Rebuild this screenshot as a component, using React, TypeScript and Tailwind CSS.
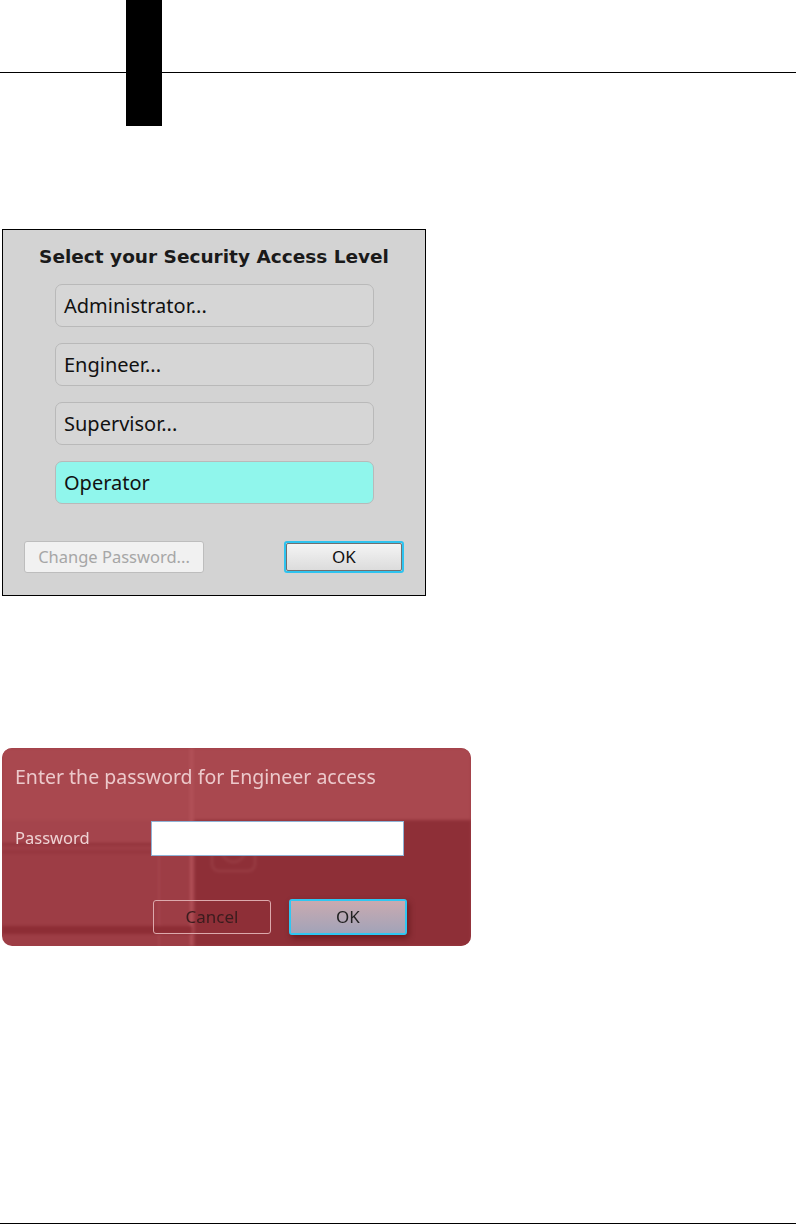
export default function App() {
  const btn =
    "h-[43px] w-[319px] rounded-[7px] border border-[#b9b9b9] px-[8px] flex items-center text-[20px] text-[#111]";
  return (
    <div className="w-[796px] h-[1225px] bg-white flex flex-col" style={{ fontFamily: '"Noto Sans", "Open Sans", sans-serif' }}>
      {/* header */}
      <div className="relative h-[126px] shrink-0">
        <div className="h-[73px] border-b border-black" />
        <div className="absolute left-[126px] top-0 w-[36px] h-[126px] bg-black" />
      </div>

      {/* Security access dialog */}
      <div className="ml-[2px] mt-[103px] w-[424px] h-[367px] border border-black bg-[#d3d3d3] flex flex-col">
        <div
          className="mt-[14px] text-center text-[18.5px] font-bold text-[#1a1a1a] leading-[26px]"
          style={{ fontFamily: '"DejaVu Sans", sans-serif' }}
        >
          Select your Security Access Level
        </div>
        <div className="mt-[14px] flex flex-col items-center gap-[16px] pl-[1px]">
          <div className={btn + " bg-[#d6d6d6]"}>Administrator...</div>
          <div className={btn + " bg-[#d6d6d6]"}>Engineer...</div>
          <div className={btn + " bg-[#d6d6d6]"}>Supervisor...</div>
          <div className={btn + " bg-[#90f6ec]"}>Operator</div>
        </div>
        <div className="mt-auto mb-[22px] flex justify-between px-[21px]">
          <div className="w-[180px] h-[32px] rounded-[3px] border border-[#bdbdbd] bg-[#f1f1f1] flex items-center justify-center text-[16.5px] text-[#a6a6a6]">
            Change Password...
          </div>
          <div className="w-[120px] h-[32px] rounded-[3px] border-2 border-[#2ec3ef] p-0">
            <div className="w-full h-full rounded-[2px] border border-[#707070] bg-gradient-to-b from-[#f4f4f4] to-[#dcdcdc] flex items-center justify-center text-[17px] text-[#111]">
              OK
            </div>
          </div>
        </div>
      </div>

      {/* Password dialog */}
      <div className="relative ml-[2px] mt-[152px] w-[469px] h-[198px] rounded-[10px] overflow-hidden bg-[#9d3d45]">
        {/* blurred backdrop */}
        <div className="absolute inset-0 blur-[1.5px]">
          <div className="absolute left-0 top-0 w-full h-[72px] bg-[#a9484f]" />
          <div className="absolute left-[193px] top-[72px] right-0 bottom-0 bg-[#8e2f37]" />
          <div className="absolute left-0 top-[72px] w-[190px] h-[23px] bg-[#a4444c]" />
          <div className="absolute left-0 top-[95px] w-[190px] h-[2px] bg-[#8e3038]" />
          <div className="absolute left-0 top-[103px] w-[158px] h-[2px] bg-[#93343c]" />
          <div className="absolute left-[188px] top-0 w-[3px] h-full bg-[#b35259]" />
          <div className="absolute left-[156px] top-[96px] w-[2px] h-full bg-[#a6464d]" />
          <div className="absolute left-0 top-[178px] w-[190px] h-[8px] bg-[#8d2d35]" />
          <div className="absolute left-[209px] top-[80px] w-[45px] h-[44px] rounded-[8px] border-2 border-[#9a3f46]" />
          <div className="absolute left-[219px] top-[90px] w-[25px] h-[25px] rounded-full border-2 border-[#9a3f46]" />
        </div>
        <div className="relative flex flex-col h-full">
          <div className="mt-[16px] ml-[13px] text-[19.5px] leading-[26px] text-[#ecc9cb]">
            Enter the password for Engineer access
          </div>
          <div className="mt-[31px] flex items-center">
            <div className="ml-[13px] w-[136px] text-[16.5px] text-[#eed3d4]">Password</div>
            <div className="w-[253px] h-[35px] bg-white border border-[#8fb3d6]" />
          </div>
          <div className="mt-[44px] flex gap-[18px] ml-[151px]">
            <div className="w-[118px] h-[34px] rounded-[3px] border border-[#dca9ac] flex items-center justify-center text-[17px] text-[#3a1c1e]">
              Cancel
            </div>
            <div className="w-[118px] h-[36px] mt-[-1px] rounded-[3px] border-2 border-[#2fc7f2] shadow-[2px_3px_6px_rgba(60,0,0,0.45)]">
              <div className="w-full h-full bg-gradient-to-b from-[#c9aab0] to-[#a2a3b8] flex items-center justify-center text-[17px] text-[#222]">
                OK
              </div>
            </div>
          </div>
        </div>
      </div>

      <div className="mt-auto mb-[1px] h-px bg-black" />
    </div>
  );
}
